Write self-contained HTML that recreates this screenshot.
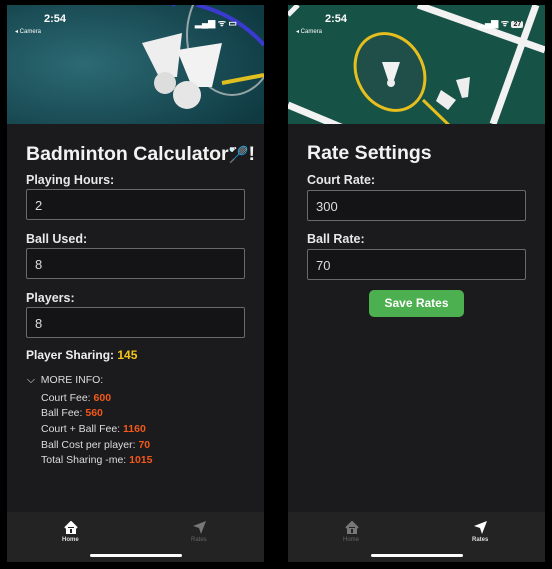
<!DOCTYPE html>
<html><head><meta charset="utf-8"><style>
*{margin:0;padding:0;box-sizing:border-box}
body{width:552px;height:569px;background:#000;font-family:"Liberation Sans",sans-serif;position:relative;overflow:hidden;color:#eee}
.ph{position:absolute;top:5px;width:257px;height:557px;background:#1b1b1d;overflow:hidden}
.a{position:absolute;white-space:nowrap}
.lbl{font-size:12.5px;font-weight:bold;color:#e8e8e8}
.in{position:absolute;border:1px solid #6a6a6a;border-radius:2px;background:#141416;font-size:13px;color:#ddd;padding:8px 0 0 8px}
.t{font-size:19.5px;font-weight:bold;color:#f2f2f2}
.i{font-size:10.5px;color:#ddd}
.o{color:#f2581a;font-weight:bold}
.tab{position:absolute;left:0;top:507px;width:257px;height:50px;background:#232323}
.hb{position:absolute;top:549px;left:83px;width:92px;height:3px;border-radius:2px;background:#fff}
.st{position:absolute;font-size:10px;font-weight:bold;color:#fff}
</style></head><body>

<div class="ph" style="left:7px">
<svg class="a" style="left:0;top:0" width="257" height="119">
<defs><radialGradient id="g1" cx="0.3" cy="0.5" r="0.8"><stop offset="0" stop-color="#2c6a74"/><stop offset="1" stop-color="#0f3a42"/></radialGradient></defs>
<rect width="257" height="119" fill="url(#g1)"/>
<ellipse cx="225" cy="30" rx="45" ry="60" fill="none" stroke="#ccc" stroke-width="2" opacity=".7"/>
<path d="M165 0 L175 -5 M190 0 Q230 10 257 40" stroke="#3a3ad0" stroke-width="4" fill="none"/>
<path d="M215 78 L257 70" stroke="#e0c020" stroke-width="4"/>
<path d="M135 38 L175 28 L170 72 L152 72 Z" fill="#eee"/>
<circle cx="158" cy="78" r="11" fill="#ddd"/>
<path d="M170 45 L215 38 L205 82 L185 82 Z" fill="#f2f2f2"/>
<circle cx="180" cy="90" r="14" fill="#e6e6e6"/>
</svg>
<div class="st" style="left:37px;top:8px;font-size:11px">2:54</div>
<div class="st" style="left:8px;top:23px;font-size:6px;font-weight:normal">◂ Camera</div>
<div class="st" style="left:188px;top:11px;font-size:9px">▂▄▆ ᯤ ▭</div>
<div class="a t" style="left:19px;top:138px">Badminton Calculator<span style="font-size:16px">🏸</span>!</div>
<div class="a lbl" style="left:19px;top:168px">Playing Hours:</div>
<div class="in" style="left:19px;top:184px;width:219px;height:31px">2</div>
<div class="a lbl" style="left:19px;top:227px">Ball Used:</div>
<div class="in" style="left:19px;top:243px;width:219px;height:31px">8</div>
<div class="a lbl" style="left:19px;top:286px">Players:</div>
<div class="in" style="left:19px;top:302px;width:219px;height:31px">8</div>
<div class="a" style="left:19px;top:343px;font-size:12px;font-weight:bold">Player Sharing: <span style="color:#f5c518">145</span></div>
<div class="a i" style="left:20px;top:369px">⌵ &nbsp;MORE INFO:</div>
<div class="a i" style="left:34px;top:387px">Court Fee: <span class="o">600</span></div>
<div class="a i" style="left:34px;top:402px">Ball Fee: <span class="o">560</span></div>
<div class="a i" style="left:34px;top:418px">Court + Ball Fee: <span class="o">1160</span></div>
<div class="a i" style="left:34px;top:434px">Ball Cost per player: <span class="o">70</span></div>
<div class="a i" style="left:34px;top:449px">Total Sharing -me: <span class="o">1015</span></div>
<div class="tab">
<svg class="a" style="left:57px;top:9px" width="14" height="13"><path d="M1 7 L7 1 L13 7 M3 6 V12 H11 V6" stroke="#fff" stroke-width="2" fill="#fff"/><rect x="6" y="8" width="2" height="4" fill="#232323"/></svg>
<div class="a" style="left:55px;top:25px;font-size:6px;font-weight:bold;color:#ddd">Home</div>
<svg class="a" style="left:185px;top:8px" width="15" height="14"><path d="M14 1 L1 6 L7 8 L9 14 Z" fill="#777"/></svg>
<div class="a" style="left:184px;top:25px;font-size:6px;color:#666">Rates</div>
</div>
<div class="hb"></div>
</div>

<div class="ph" style="left:288px">
<svg class="a" style="left:0;top:0" width="257" height="119">
<rect width="257" height="119" fill="#175247"/>
<path d="M130 0 L257 45" stroke="#f2f2f2" stroke-width="7"/>
<path d="M248 0 L205 119" stroke="#f2f2f2" stroke-width="7"/>
<path d="M0 100 L60 125" stroke="#f2f2f2" stroke-width="7"/>
<path d="M0 10 L10 0" stroke="#f2f2f2" stroke-width="5"/>
<ellipse cx="102" cy="67" rx="33" ry="40" transform="rotate(-30 102 67)" fill="#1f4f48" stroke="#e6bf1e" stroke-width="3"/>
<path d="M135 95 L165 124" stroke="#e6bf1e" stroke-width="3"/>
<path d="M94 57 L112 57 L106 75 L100 75 Z" fill="#f2f2f2"/><circle cx="103" cy="78" r="4" fill="#eee"/>
<path d="M153 85 L168 95 L160 105 L148 96 Z" fill="#eee"/>
<path d="M168 75 L182 72 L180 92 L174 93 Z" fill="#eee"/>
</svg>
<div class="st" style="left:37px;top:8px;font-size:11px">2:54</div>
<div class="st" style="left:8px;top:23px;font-size:6px;font-weight:normal">◂ Camera</div>
<div class="st" style="left:190px;top:11px;font-size:9px">▂▄▆ ᯤ <span style="background:#eee;color:#222;border-radius:2px;padding:0 2px;font-size:7px">27</span></div>
<div class="a t" style="left:19px;top:137px">Rate Settings</div>
<div class="a lbl" style="left:19px;top:168px">Court Rate:</div>
<div class="in" style="left:19px;top:185px;width:219px;height:31px">300</div>
<div class="a lbl" style="left:19px;top:227px">Ball Rate:</div>
<div class="in" style="left:19px;top:244px;width:219px;height:31px">70</div>
<div class="a" style="left:81px;top:285px;width:95px;height:27px;background:#4caf50;border-radius:5px;color:#fff;font-size:12px;font-weight:bold;text-align:center;line-height:27px">Save Rates</div>
<div class="tab">
<svg class="a" style="left:57px;top:9px" width="14" height="13"><path d="M1 7 L7 1 L13 7 M3 6 V12 H11 V6" stroke="#777" stroke-width="2" fill="#777"/><rect x="6" y="8" width="2" height="4" fill="#232323"/></svg>
<div class="a" style="left:55px;top:25px;font-size:6px;color:#666">Home</div>
<svg class="a" style="left:185px;top:8px" width="15" height="14"><path d="M14 1 L1 6 L7 8 L9 14 Z" fill="#fff"/></svg>
<div class="a" style="left:184px;top:25px;font-size:6px;font-weight:bold;color:#ddd">Rates</div>
</div>
<div class="hb"></div>
</div>
</body></html>
